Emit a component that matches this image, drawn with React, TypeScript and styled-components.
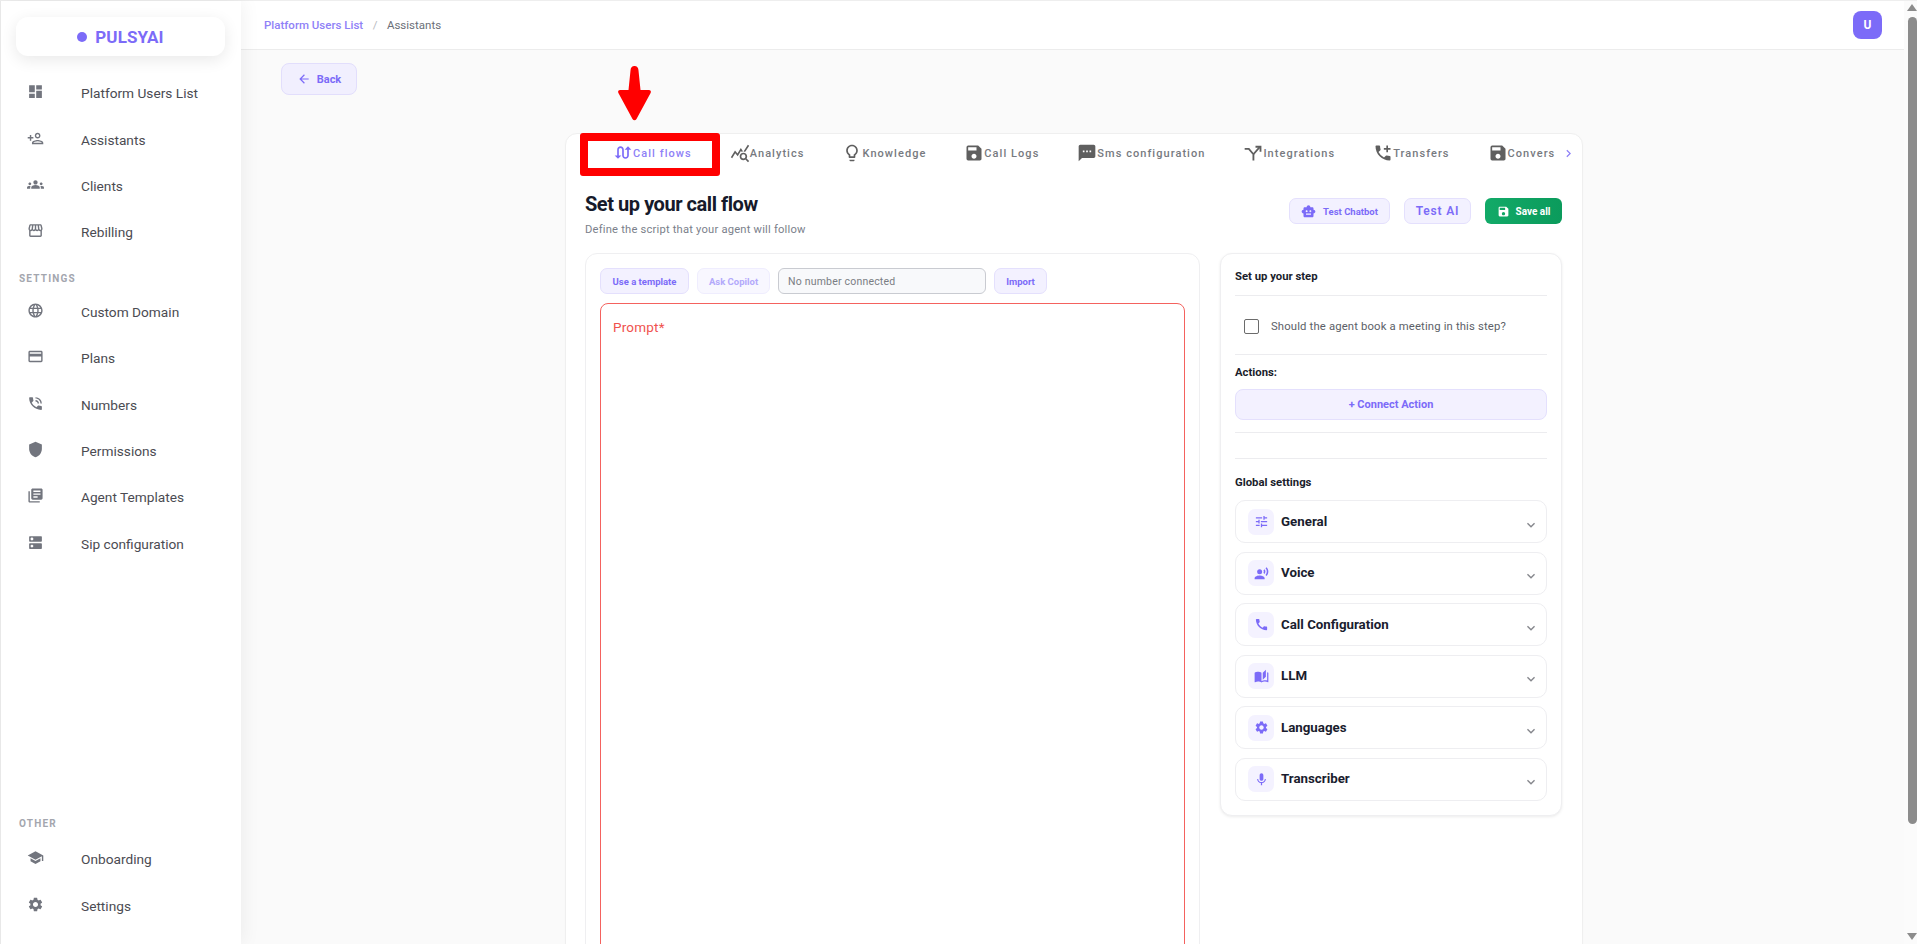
import React from 'react'
import styled, { createGlobalStyle } from 'styled-components'
import {
  MdDashboard,
  MdOutlinePersonAdd,
  MdGroups,
  MdOutlineStorefront,
  MdLanguage,
  MdPayment,
  MdPhoneInTalk,
  MdShield,
  MdLibraryBooks,
  MdDns,
  MdSchool,
  MdSettings,
  MdSwapCalls,
  MdQueryStats,
  MdOutlineLightbulb,
  MdSave,
  MdSms,
  MdAddIcCall,
  MdSmartToy,
  MdArrowBack,
  MdTune,
  MdRecordVoiceOver,
  MdCall,
  MdAutoStories,
  MdMic,
  MdChevronRight,
  MdChevronLeft,
  MdExpandMore,
} from 'react-icons/md'

const purple = '#7c6bf8'

const GlobalStyle = createGlobalStyle`
  html, body {
    margin: 0;
    padding: 0;
    height: 100%;
    overflow: hidden;
    font-family: Roboto, "Liberation Sans", sans-serif;
    background: #fafafa;
  }
  * { box-sizing: border-box; }
`

const Shell = styled.div`
  display: flex;
  height: 100vh;
  border-top: 1px solid #eee;
`

const Sidebar = styled.aside`
  flex: 0 0 241px;
  display: flex;
  flex-direction: column;
  background: #fff;
  border-left: 1px solid #e8e8e8;
  box-shadow: 2px 0 18px rgba(0, 0, 0, 0.06);
  padding: 16px 16px 15px 15px;
  z-index: 2;
`

const LogoBox = styled.div`
  height: 39px;
  display: flex;
  align-items: center;
  justify-content: center;
  gap: 8px;
  background: #fff;
  border-radius: 12px;
  box-shadow: 0 4px 16px rgba(0, 0, 0, 0.09);
  color: ${purple};
  font-size: 17px;
  font-weight: 700;
  letter-spacing: 0.1px;
  margin-bottom: 14px;
`

const LogoDot = styled.span`
  width: 10px;
  height: 10px;
  border-radius: 50%;
  background: ${purple};
`

const NavItem = styled.div`
  height: 46.4px;
  display: flex;
  align-items: center;
  padding-left: 11px;
  color: #4b4b52;
  font-size: 13.7px;
`

const NavIcon = styled.span`
  width: 54px;
  display: flex;
  margin-top: -3px;
  color: #72757e;
  svg { width: 17px; height: 17px; }
`

const NavLabel = styled.div<{ $top?: string; $bottom?: string }>`
  color: #a3a6ae;
  font-size: 10px;
  font-weight: 700;
  letter-spacing: 1.2px;
  padding: 0 3px;
  line-height: 12px;
  margin: ${p => p.$top ?? '0'} 0 ${p => p.$bottom ?? '6px'};
`

const NavGroup = styled.nav`
  display: flex;
  flex-direction: column;
`

const Spacer = styled.div`
  flex: 1;
`

const Main = styled.main`
  flex: 1;
  min-width: 0;
  overflow: hidden;
  background: #fafafa;
`

const ScrollRail = styled.div`
  flex: 0 0 13px;
  display: flex;
  flex-direction: column;
  align-items: flex-end;
  background: #fbfbfb;
  padding: 3px 0 4px;
`

const RailArrow = styled.span<{ $down?: boolean }>`
  width: 0;
  height: 0;
  border-left: 5px solid transparent;
  border-right: 5px solid transparent;
  border-bottom: ${p => (p.$down ? '0' : '7px solid #8c8c8c')};
  border-top: ${p => (p.$down ? '7px solid #8c8c8c' : '0')};
`

const RailThumb = styled.div`
  width: 9px;
  height: 807px;
  margin-top: 6px;
  border-radius: 5px;
  background: #8c8c8c;
`

const TopBar = styled.header`
  height: 49px;
  background: #fff;
  border-bottom: 1px solid #ececec;
  display: flex;
  align-items: center;
  justify-content: space-between;
  padding: 0 22px 0 23px;
`

const Crumbs = styled.div`
  display: flex;
  gap: 9.5px;
  font-size: 11.5px;
  color: #6b6f78;
  margin-top: -1px;
`

const CrumbLink = styled.span`
  color: #8f81f7;
  font-weight: 500;
`

const CrumbSep = styled.span`
  color: #b8bac0;
`

const Avatar = styled.div`
  width: 29px;
  height: 28px;
  border-radius: 8px;
  background: ${purple};
  color: #fff;
  font-size: 12px;
  font-weight: 700;
  display: flex;
  align-items: center;
  justify-content: center;
`

const Content = styled.div`
  padding: 13px 40px 0;
`

const BackButton = styled.button`
  width: 76px;
  height: 32px;
  display: flex;
  align-items: center;
  justify-content: center;
  gap: 6px;
  background: #f1effe;
  border: 1px solid #e2defc;
  border-radius: 8px;
  color: ${purple};
  font: 700 11px Roboto, sans-serif;
  svg { width: 14px; height: 14px; }
`

const Card = styled.section`
  position: relative;
  width: 1018px;
  margin: 38px 0 0 284px;
  background: #fff;
  border: 1px solid #efefef;
  border-radius: 12px;
  padding: 0 20px 20px 19px;
  box-shadow: 0 1px 3px rgba(0, 0, 0, 0.02);
`

const TabsRow = styled.div`
  height: 38px;
  margin: 0 -20px 0 -19px;
  padding: 0 4px 0 8px;
  display: flex;
  align-items: center;
  position: relative;
`

const TabArrow = styled.span<{ $faded?: boolean }>`
  flex: 0 0 20px;
  display: flex;
  justify-content: center;
  color: ${p => (p.$faded ? '#d9d4fd' : '#8f81f7')};
  svg { width: 15px; height: 15px; }
`

const TabScroller = styled.div`
  flex: 1;
  min-width: 0;
  display: flex;
  overflow: hidden;
  margin-right: 3px;
`

const Tab = styled.div<{ $active?: boolean }>`
  flex: 0 0 auto;
  display: flex;
  align-items: center;
  padding: 0 19px;
  font-size: 11px;
  font-weight: 500;
  letter-spacing: 1.05px;
  color: ${p => (p.$active ? '#8f81f7' : '#777a80')};
  svg {
    width: 20px;
    height: 20px;
    color: ${p => (p.$active ? purple : '#5f5f5f')};
  }
`

const RedBox = styled.div`
  position: absolute;
  left: 14px;
  top: -1px;
  width: 140px;
  height: 43px;
  border: 8px solid #f00;
  border-radius: 3px;
  pointer-events: none;
`

const RedArrow = styled.svg`
  position: absolute;
  left: 52px;
  top: -68px;
  width: 33px;
  height: 56px;
`

const HeadRow = styled.div`
  display: flex;
  justify-content: space-between;
  align-items: flex-start;
  margin-top: 19px;
`

const Title = styled.h1`
  margin: 0;
  font-size: 20px;
  line-height: 26px;
  font-weight: 700;
  color: #161a2b;
  letter-spacing: -0.45px;
`

const Subtitle = styled.p`
  margin: 6px 0 0;
  font-size: 11.2px;
  line-height: 14px;
  color: #7b7f8b;
  letter-spacing: 0.2px;
`

const HeadActions = styled.div`
  display: flex;
  gap: 14px;
  margin-top: 7px;
`

const SoftButton = styled.button<{ $w: number; $muted?: boolean; $plain?: boolean }>`
  width: ${p => p.$w}px;
  height: 26px;
  display: flex;
  align-items: center;
  justify-content: center;
  gap: 7px;
  padding: 0;
  background: ${p => (p.$muted ? '#f8f7ff' : '#f3f1ff')};
  border: 1px solid ${p => (p.$muted ? '#efedfe' : '#e4e0fd')};
  border-radius: 7px;
  color: ${p => (p.$muted ? '#b3a9fb' : purple)};
  font: ${p => (p.$plain ? '600 12px' : '700 9.5px')} Roboto, sans-serif;
  letter-spacing: ${p => (p.$plain ? '0.8px' : '0')};
  svg { width: 15px; height: 15px; }
`

const SaveButton = styled.button`
  width: 77px;
  height: 26px;
  display: flex;
  align-items: center;
  justify-content: center;
  gap: 6px;
  background: linear-gradient(90deg, #12aa68, #0b9b5c);
  border: 0;
  border-radius: 6px;
  color: #fff;
  font: 700 10px Roboto, sans-serif;
  svg { width: 13px; height: 13px; }
`

const Columns = styled.div`
  display: flex;
  align-items: flex-start;
  justify-content: space-between;
  margin-top: 16px;
`

const Panel = styled.div<{ $w: number }>`
  width: ${p => p.$w}px;
  background: #fff;
  border: 1px solid #efeff1;
  border-radius: 12px;
`

const PromptPanel = styled(Panel)`
  padding: 14px;
  height: 732px;
  display: flex;
  flex-direction: column;
  gap: 9px;
`

const Toolbar = styled.div`
  display: flex;
  gap: 8px;
`

const NumberField = styled.div`
  width: 208px;
  height: 26px;
  display: flex;
  align-items: center;
  padding: 0 9px;
  background: #f8f9fb;
  border: 1px solid #c9cbd1;
  border-radius: 6px;
  color: #7a7d83;
  font-size: 10.5px;
  letter-spacing: 0.2px;
`

const PromptBox = styled.div`
  flex: 1;
  border: 1px solid #f4625e;
  border-radius: 8px;
  padding: 15px 12px;
  color: #f0524e;
  font-size: 13.5px;
  letter-spacing: 0.2px;
`

const StepPanel = styled(Panel)`
  padding: 0 14px 14px;
  box-shadow: 0 1px 3px rgba(0, 0, 0, 0.08);
`

const StepTitle = styled.div`
  font-size: 11.3px;
  font-weight: 700;
  color: #1a1d2b;
  line-height: 14px;
`

const StepHead = styled(StepTitle)`
  padding: 16px 0 11px;
  border-bottom: 1px solid #ececef;
`

const CheckRow = styled.label`
  display: flex;
  align-items: center;
  gap: 12px;
  height: 59px;
  padding: 2px 0 0 9px;
  border-bottom: 1px solid #ececef;
  font-size: 11.3px;
  color: #5c5f68;
  letter-spacing: 0.15px;
`

const CheckBox = styled.span`
  width: 15px;
  height: 15px;
  border: 1.5px solid #6b6b6b;
  border-radius: 2px;
`

const ActionsBlock = styled.div`
  padding: 11px 0 12px;
  border-bottom: 1px solid #ececef;
`

const ConnectButton = styled.button`
  width: 100%;
  height: 31px;
  margin-top: 9px;
  background: #f3f1ff;
  border: 1px solid #e4e0fd;
  border-radius: 8px;
  color: ${purple};
  font: 700 11px Roboto, sans-serif;
`

const GlobalBlock = styled.div`
  margin-top: 25px;
  padding-top: 17px;
  border-top: 1px solid #ececef;
  display: flex;
  flex-direction: column;
`

const AccordionList = styled.div`
  display: flex;
  flex-direction: column;
  gap: 8.6px;
  margin-top: 10px;
`

const AccordionRow = styled.div`
  height: 43px;
  display: flex;
  align-items: center;
  padding: 0 7px 0 12px;
  background: #fff;
  border: 1px solid #eeeef1;
  border-radius: 10px;
  svg.chev {
    width: 16px;
    height: 16px;
    color: #85868c;
    margin-left: auto;
    margin-top: 6px;
  }
`

const AccordionIcon = styled.span`
  width: 26px;
  height: 26px;
  display: flex;
  align-items: center;
  justify-content: center;
  border-radius: 7px;
  background: #f4f2ff;
  color: ${purple};
  margin-right: 7px;
  svg { width: 15px; height: 15px; }
`

const AccordionTitle = styled.span`
  font-size: 13.3px;
  font-weight: 700;
  color: #1a1d2e;
  margin-top: -1px;
`

// no matching icon in the packages: a fork with one arrow head going up right
const IntegrationsIcon: React.FC = () => (
  <svg viewBox="0 0 24 24" fill="none" stroke="currentColor" strokeWidth="2.2">
    <path d="M2 7h5l5.5 6.5V21" />
    <path d="M12.5 13.5 20 5" />
    <path d="M15 4.5h6v6" />
  </svg>
)

const mainNav = [
  { icon: <MdDashboard />, label: 'Platform Users List' },
  { icon: <MdOutlinePersonAdd />, label: 'Assistants' },
  { icon: <MdGroups />, label: 'Clients' },
  { icon: <MdOutlineStorefront />, label: 'Rebilling' },
]

const settingsNav = [
  { icon: <MdLanguage />, label: 'Custom Domain' },
  { icon: <MdPayment />, label: 'Plans' },
  { icon: <MdPhoneInTalk />, label: 'Numbers' },
  { icon: <MdShield />, label: 'Permissions' },
  { icon: <MdLibraryBooks />, label: 'Agent Templates' },
  { icon: <MdDns />, label: 'Sip configuration' },
]

const otherNav = [
  { icon: <MdSchool />, label: 'Onboarding' },
  { icon: <MdSettings />, label: 'Settings' },
]

const tabs = [
  { icon: <MdSwapCalls />, label: 'Call flows' },
  { icon: <MdQueryStats />, label: 'Analytics' },
  { icon: <MdOutlineLightbulb />, label: 'Knowledge' },
  { icon: <MdSave />, label: 'Call Logs' },
  { icon: <MdSms />, label: 'Sms configuration' },
  { icon: <IntegrationsIcon />, label: 'Integrations' },
  { icon: <MdAddIcCall />, label: 'Transfers' },
  { icon: <MdSave />, label: 'Conversations' },
]

const accordions = [
  { icon: <MdTune />, label: 'General' },
  { icon: <MdRecordVoiceOver />, label: 'Voice' },
  { icon: <MdCall />, label: 'Call Configuration' },
  { icon: <MdAutoStories />, label: 'LLM' },
  { icon: <MdSettings />, label: 'Languages' },
  { icon: <MdMic />, label: 'Transcriber' },
]

const NavList: React.FC<{ items: { icon: React.ReactNode; label: string }[] }> = ({ items }) => (
  <NavGroup>
    {items.map(item => (
      <NavItem key={item.label}>
        <NavIcon>{item.icon}</NavIcon>
        {item.label}
      </NavItem>
    ))}
  </NavGroup>
)

const App: React.FC = () => {
  return (
    <Shell>
      <GlobalStyle />
      <Sidebar>
        <LogoBox>
          <LogoDot />
          PULSYAI
        </LogoBox>
        <NavList items={mainNav} />
        <NavLabel $top="17px" $bottom="4px">SETTINGS</NavLabel>
        <NavList items={settingsNav} />
        <Spacer />
        <NavLabel>OTHER</NavLabel>
        <NavList items={otherNav} />
      </Sidebar>
      <Main>
        <TopBar>
          <Crumbs>
            <CrumbLink>Platform Users List</CrumbLink>
            <CrumbSep>/</CrumbSep>
            <span>Assistants</span>
          </Crumbs>
          <Avatar>U</Avatar>
        </TopBar>
        <Content>
          <BackButton>
            <MdArrowBack />
            Back
          </BackButton>
          <Card>
            <RedArrow viewBox="0 0 33 56">
              <path
                d="M16.5 0c-2.5 0-4 2-4 4.5L10.5 24H2c-1.6 0-2.4 1.6-1.6 3L14.5 53c1 1.6 3 1.6 4 0L32.6 27c.8-1.4 0-3-1.6-3H22.5L20.5 4.5C20.5 2 19 0 16.5 0z"
                fill="#f00"
              />
            </RedArrow>
            <TabsRow>
              <TabArrow $faded>
                <MdChevronLeft />
              </TabArrow>
              <TabScroller>
                {tabs.map((tab, i) => (
                  <Tab key={tab.label} $active={i === 0}>
                    {tab.icon}
                    {tab.label}
                  </Tab>
                ))}
              </TabScroller>
              <TabArrow>
                <MdChevronRight />
              </TabArrow>
              <RedBox />
            </TabsRow>
            <HeadRow>
              <div>
                <Title>Set up your call flow</Title>
                <Subtitle>Define the script that your agent will follow</Subtitle>
              </div>
              <HeadActions>
                <SoftButton $w={101}>
                  <MdSmartToy />
                  Test Chatbot
                </SoftButton>
                <SoftButton $w={67} $plain>
                  Test AI
                </SoftButton>
                <SaveButton>
                  <MdSave />
                  Save all
                </SaveButton>
              </HeadActions>
            </HeadRow>
            <Columns>
              <PromptPanel $w={615}>
                <Toolbar>
                  <SoftButton $w={89}>Use a template</SoftButton>
                  <SoftButton $w={73} $muted>
                    Ask Copilot
                  </SoftButton>
                  <NumberField>No number connected</NumberField>
                  <SoftButton $w={53}>Import</SoftButton>
                </Toolbar>
                <PromptBox>Prompt*</PromptBox>
              </PromptPanel>
              <StepPanel $w={342}>
                <StepHead>Set up your step</StepHead>
                <CheckRow>
                  <CheckBox />
                  Should the agent book a meeting in this step?
                </CheckRow>
                <ActionsBlock>
                  <StepTitle>Actions:</StepTitle>
                  <ConnectButton>+ Connect Action</ConnectButton>
                </ActionsBlock>
                <GlobalBlock>
                  <StepTitle>Global settings</StepTitle>
                  <AccordionList>
                    {accordions.map(row => (
                      <AccordionRow key={row.label}>
                        <AccordionIcon>{row.icon}</AccordionIcon>
                        <AccordionTitle>{row.label}</AccordionTitle>
                        <MdExpandMore className="chev" />
                      </AccordionRow>
                    ))}
                  </AccordionList>
                </GlobalBlock>
              </StepPanel>
            </Columns>
          </Card>
        </Content>
      </Main>
      <ScrollRail>
        <RailArrow />
        <RailThumb />
        <Spacer />
        <RailArrow $down />
      </ScrollRail>
    </Shell>
  )
}

export default App
